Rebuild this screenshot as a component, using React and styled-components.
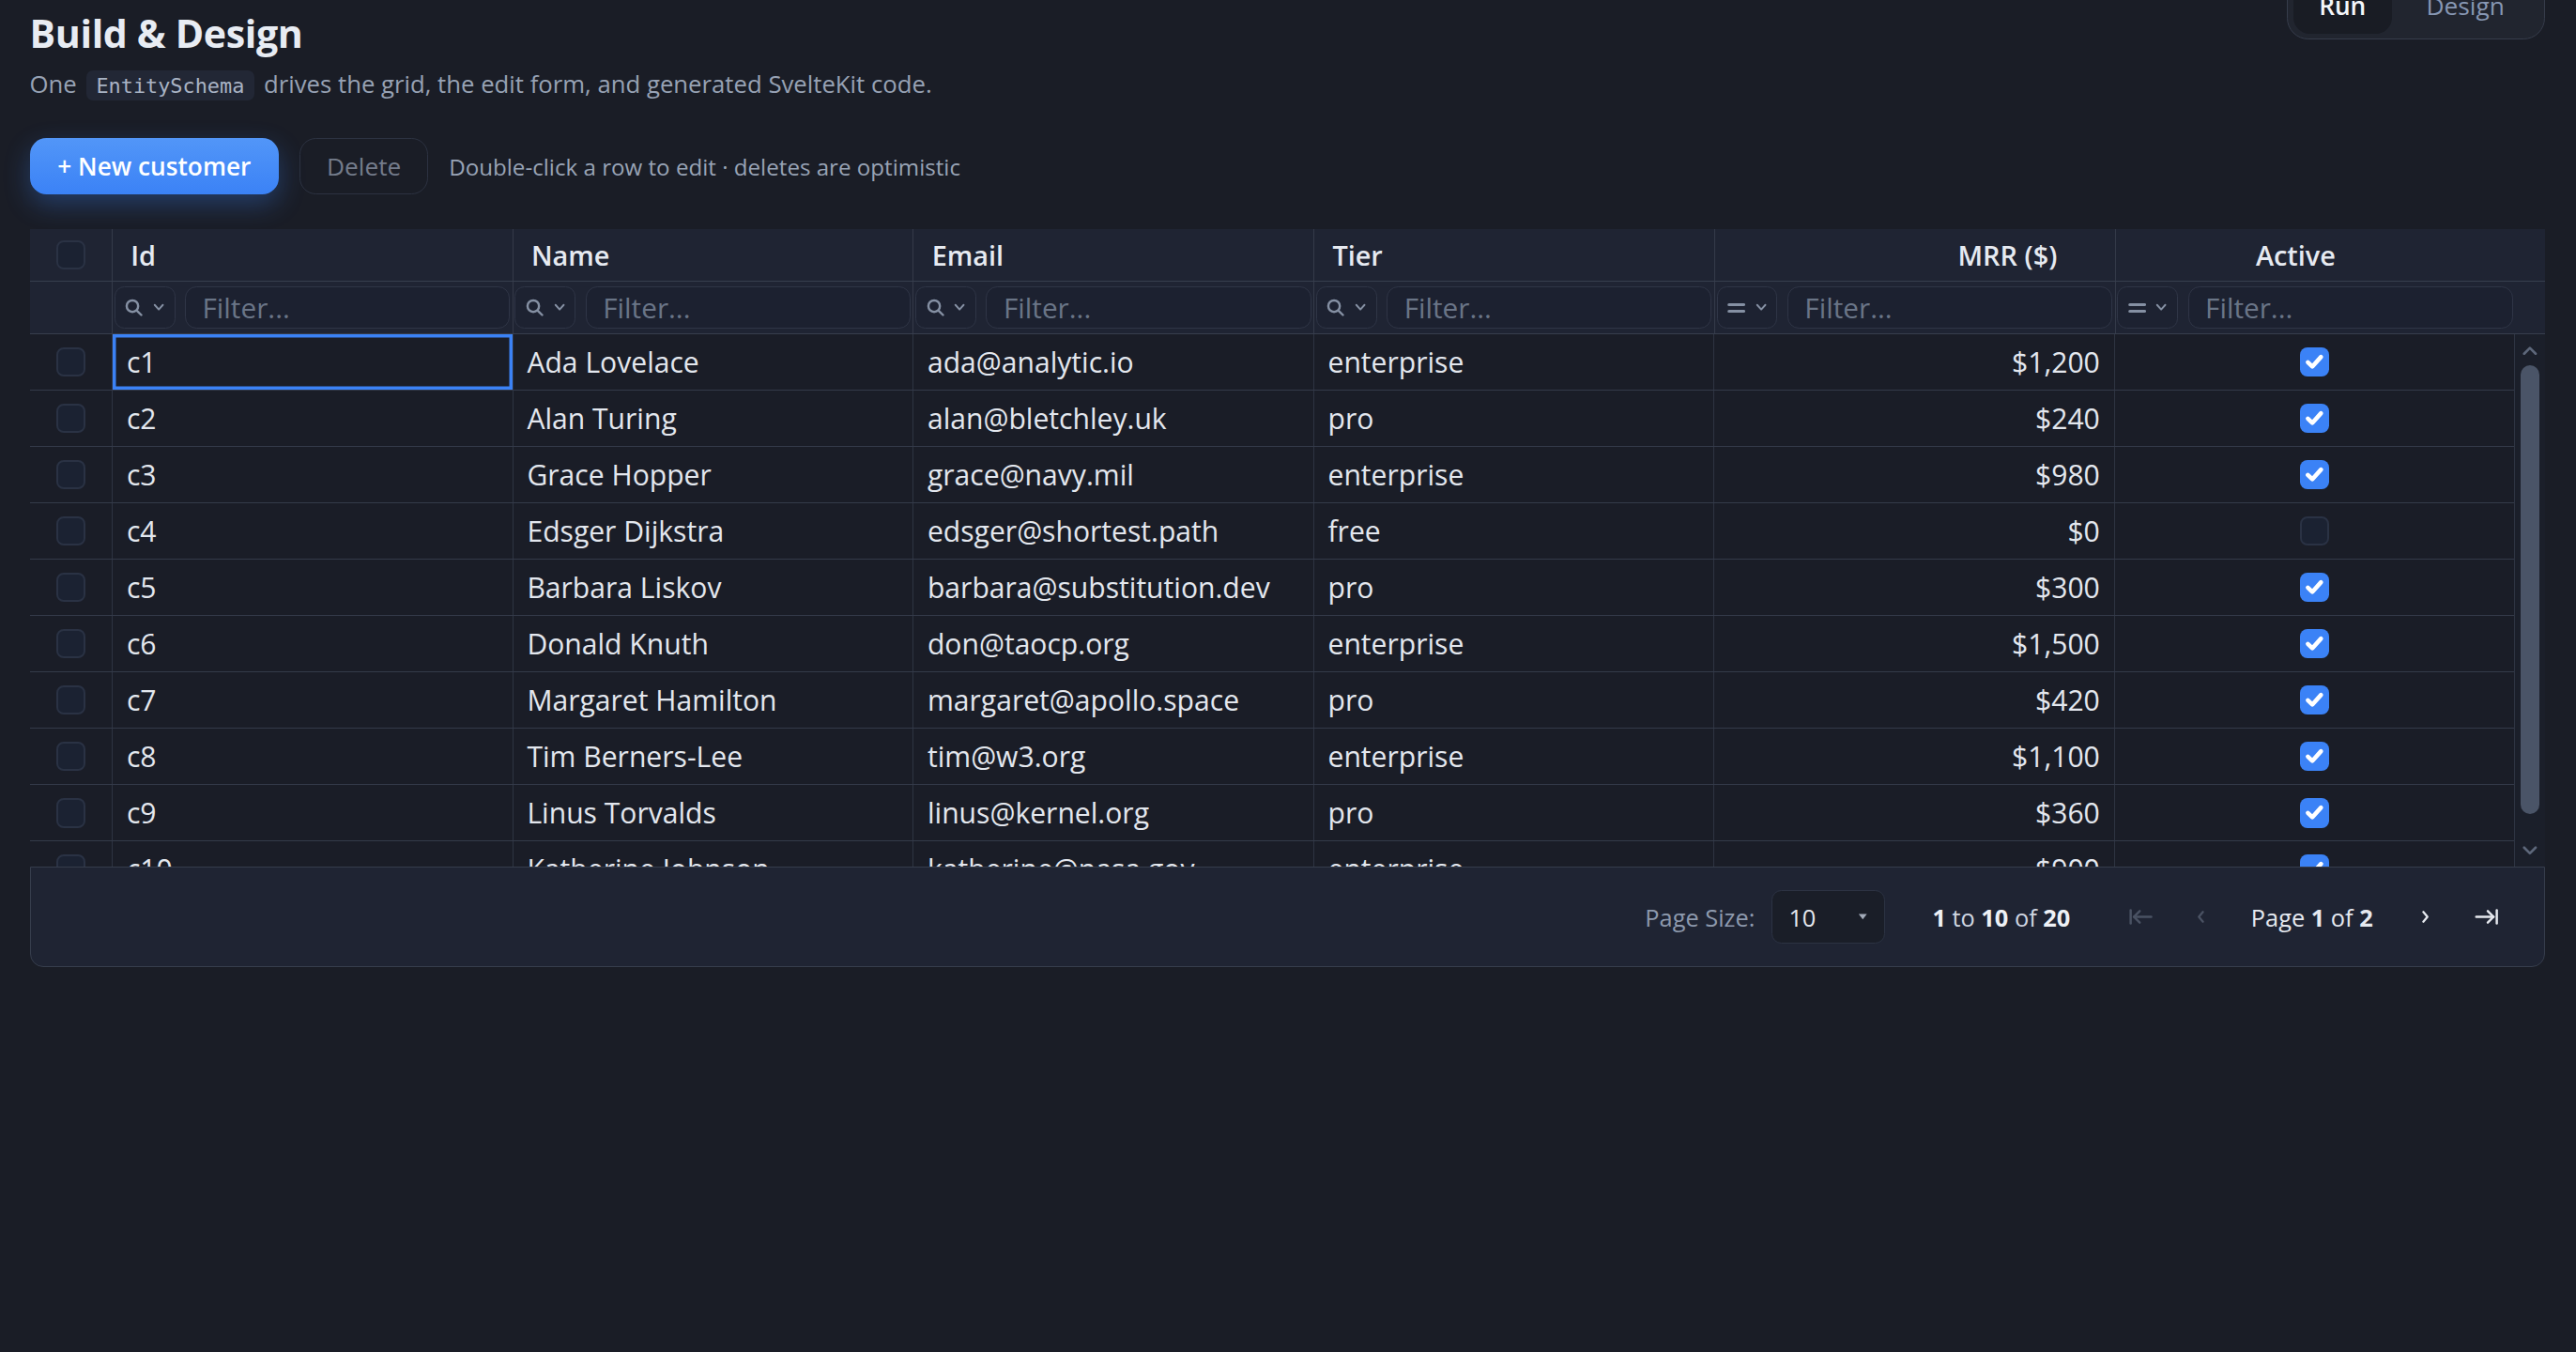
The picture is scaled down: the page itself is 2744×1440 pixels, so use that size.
import React from 'react';
import styled, { createGlobalStyle, css } from 'styled-components';

const FONT = `"Segoe UI", "Open Sans", "Noto Sans", sans-serif`;
const MONO = `"DejaVu Sans Mono", "Liberation Mono", monospace`;

const GlobalStyle = createGlobalStyle`
  html, body {
    margin: 0;
    padding: 0;
    background: #1a1d26;
    overflow: hidden;
  }
  body {
    font-family: ${FONT};
    color: #e6eaf2;
  }
`;

// the reference is laid out at 1568 css px and scaled 1.75
const Page = styled.div`
  zoom: 1.75;
  width: 1568px;
  height: 823px;
  box-sizing: border-box;
  padding: 5px 19px 0 18px;
  overflow: hidden;
`;

const TopBar = styled.div`
  display: flex;
  justify-content: space-between;
  align-items: flex-start;
`;

const TitleBlock = styled.div`
  display: flex;
  flex-direction: column;
`;

const Title = styled.h1`
  margin: 0;
  font-size: 23.5px;
  line-height: 30px;
  font-weight: 700;
  color: #e8ecf3;
  letter-spacing: -0.2px;
`;

const Subtitle = styled.p`
  margin: 6px 0 0;
  font-size: 14.7px;
  line-height: 20px;
  color: #97a2b4;
`;

const Code = styled.code`
  display: inline-block;
  font-family: ${MONO};
  font-size: 12.5px;
  line-height: 15px;
  padding: 2px 6px 1px;
  margin: 0 2px;
  border-radius: 4px;
  background: #222735;
  color: #a9b3c4;
`;

const ModeToggle = styled.div`
  display: flex;
  align-items: center;
  margin-top: -22px;
  padding: 3px;
  border: 1px solid #363c4b;
  border-radius: 13px;
  background: #21252f;
`;

const ModeButton = styled.div`
  height: 34px;
  display: flex;
  align-items: center;
  justify-content: center;
  font-size: 15px;
  font-weight: 600;
  border-radius: 10px;
  ${p => p.$active ? css`
    width: 60px;
    background: #191c24;
    color: #f4f6fa;
  ` : css`
    padding: 0 21px;
    color: #8797b3;
    font-weight: 500;
  `}
`;

const Toolbar = styled.div`
  display: flex;
  align-items: center;
  gap: 12.5px;
  margin-top: 23px;
`;

const PrimaryButton = styled.button`
  height: 34.5px;
  padding: 0 17px;
  border: none;
  border-radius: 10px;
  background: linear-gradient(180deg, #5296f8 0%, #3b82f6 100%);
  box-shadow: 0 6px 16px rgba(59, 130, 246, 0.32);
  color: #ffffff;
  font-family: ${FONT};
  font-size: 15px;
  font-weight: 600;
`;

const GhostButton = styled.button`
  height: 34.5px;
  padding: 0 16px;
  border: 1px solid #2c3241;
  border-radius: 10px;
  background: transparent;
  color: #747c8b;
  font-family: ${FONT};
  font-size: 15px;
  font-weight: 500;
`;

const Hint = styled.span`
  font-size: 13.8px;
  color: #98a3b5;
`;

const COLS = '50px repeat(6, minmax(0, 1fr))';

const Grid = styled.div`
  margin-top: 21px;
  display: flex;
  flex-direction: column;
`;

const HeaderRow = styled.div`
  display: grid;
  grid-template-columns: ${COLS} 18px;
  height: 32px;
  background: #1f2433;
  border-bottom: 1px solid #373e4d;
  box-sizing: border-box;
`;

const HeaderCell = styled.div`
  display: flex;
  align-items: center;
  justify-content: ${p => p.$align === 'right' ? 'flex-end' : p.$align === 'center' ? 'center' : 'flex-start'};
  padding: ${p => p.$align === 'right' ? '0 35px 0 11px' : p.$align === 'center' ? '0 24px 0 0' : '0 11px'};
  font-size: 16.5px;
  font-weight: 600;
  color: #e6eaf1;
  border-left: 1px solid #343a49;
  min-width: 0;
`;

const SelectCell = styled.div`
  display: flex;
  align-items: center;
  justify-content: center;
`;

const FilterRow = styled.div`
  display: grid;
  grid-template-columns: ${COLS} 18px;
  height: 32px;
  background: #1f2433;
  border-bottom: 1px solid #373e4d;
  box-sizing: border-box;
`;

const FilterCell = styled.div`
  display: flex;
  align-items: center;
  gap: 6px;
  padding: 0 1.5px 0 1px;
  border-left: 1px solid #343a49;
  min-width: 0;
`;

const FilterMenu = styled.div`
  flex: 0 0 auto;
  width: 37px;
  height: 26px;
  box-sizing: border-box;
  display: flex;
  align-items: center;
  justify-content: center;
  gap: 6px;
  border: 1px solid #2f3546;
  border-radius: 6px;
  background: #1d2231;
`;

const FilterInput = styled.div`
  flex: 1;
  height: 26px;
  box-sizing: border-box;
  display: flex;
  align-items: center;
  padding-left: 10px;
  border: 1px solid #2f3546;
  border-radius: 7px;
  background: #1c2130;
  font-size: 17px;
  color: #6a7587;
`;

const Body = styled.div`
  display: flex;
  height: 324px;
  overflow: hidden;
  background: #1a1d27;
`;

const Rows = styled.div`
  flex: 1;
  display: flex;
  flex-direction: column;
`;

const Row = styled.div`
  flex: 0 0 auto;
  display: grid;
  grid-template-columns: ${COLS};
  height: 34.3px;
  box-sizing: border-box;
  border-bottom: 1px solid #343a49;
`;

const Cell = styled.div`
  display: flex;
  align-items: center;
  justify-content: ${p => p.$align === 'right' ? 'flex-end' : p.$align === 'center' ? 'center' : 'flex-start'};
  padding: 0 8.5px;
  font-size: 17.2px;
  color: #e3e7ee;
  border-left: 1px solid #2e3442;
  white-space: nowrap;
  overflow: hidden;
  min-width: 0;
  ${p => p.$focused && css`
    box-shadow: inset 0 0 0 2px #3b82f6;
  `}
`;

const Scrollbar = styled.div`
  flex: 0 0 18px;
  border-left: 1px solid #2e3442;
  background: #1b1f2a;
  display: flex;
  flex-direction: column;
  align-items: center;
`;

const ScrollArrow = styled.div`
  height: 19px;
  display: flex;
  align-items: center;
  justify-content: center;
`;

const ScrollThumb = styled.div`
  width: 11px;
  height: 273px;
  border-radius: 6px;
  background: #4a5467;
`;

const ScrollSpacer = styled.div`
  flex: 1;
`;

const Box = styled.div`
  width: 18px;
  height: 18px;
  box-sizing: border-box;
  border-radius: 4.5px;
  display: flex;
  align-items: center;
  justify-content: center;
  ${p => p.$checked ? css`
    background: #3b82f6;
  ` : css`
    background: #1b2232;
    border: 1.5px solid #2a3244;
  `}
`;

const Footer = styled.div`
  height: 61px;
  box-sizing: border-box;
  display: flex;
  align-items: center;
  justify-content: flex-end;
  padding-right: 27px;
  background: #1f2433;
  border: 1px solid #363d4c;
  border-radius: 0 0 8px 8px;
  font-size: 14.5px;
  color: #cdd4df;
`;

const PageSizeLabel = styled.span`
  color: #8d99ad;
  margin-right: 10px;
`;

const PageSizeSelect = styled.div`
  width: 69px;
  height: 33px;
  box-sizing: border-box;
  display: flex;
  align-items: center;
  justify-content: space-between;
  padding: 0 10px;
  border: 1px solid #2c3343;
  border-radius: 6px;
  background: #1a1e28;
  color: #e5e8ee;
  margin-right: 29px;
`;

const Summary = styled.span`
  color: #cfd6e1;
  margin-right: 35px;
  b { color: #eef1f6; font-weight: 700; }
`;

const PageLabel = styled.span`
  color: #e5e9f0;
  b { font-weight: 700; }
`;

const PagerIcon = styled.span`
  display: inline-flex;
  align-items: center;
  margin: ${p => p.$gap || '0'};
  color: ${p => p.$disabled ? '#4a5263' : '#e6e9ef'};
`;

const SearchIcon = () => (
  <svg width="11" height="11" viewBox="0 0 11 11" fill="none" stroke="#8590a3" strokeWidth="1.4" strokeLinecap="round">
    <circle cx="4.6" cy="4.6" r="3.5" />
    <line x1="7.3" y1="7.3" x2="10" y2="10" />
  </svg>
);

const EqualsIcon = () => (
  <svg width="11" height="8" viewBox="0 0 11 8" fill="none" stroke="#8590a3" strokeWidth="1.8" strokeLinecap="round">
    <line x1="1" y1="2" x2="10" y2="2" />
    <line x1="1" y1="6" x2="10" y2="6" />
  </svg>
);

const SmallChevron = () => (
  <svg width="7" height="5" viewBox="0 0 7 5" fill="none" stroke="#8590a3" strokeWidth="1.1" strokeLinecap="round" strokeLinejoin="round">
    <polyline points="1,1 3.5,3.8 6,1" />
  </svg>
);

const Check = () => (
  <svg width="13" height="13" viewBox="0 0 13 13" fill="none" stroke="#ffffff" strokeWidth="2.6" strokeLinecap="round" strokeLinejoin="round">
    <polyline points="2.5,6.8 5.2,9.4 10.5,3.5" />
  </svg>
);

const ScrollChevron = ({ up }) => (
  <svg width="9" height="6" viewBox="0 0 9 6" fill="none" stroke="#5d677a" strokeWidth="1.5" strokeLinecap="round" strokeLinejoin="round">
    <polyline points={up ? '1,5 4.5,1.5 8,5' : '1,1 4.5,4.5 8,1'} />
  </svg>
);

const FirstIcon = () => (
  <svg width="15" height="12" viewBox="0 0 15 12" fill="none" stroke="currentColor" strokeWidth="1.4" strokeLinecap="round" strokeLinejoin="round">
    <line x1="1.5" y1="2" x2="1.5" y2="10" />
    <line x1="3.5" y1="6" x2="14" y2="6" />
    <polyline points="7,2.5 3.5,6 7,9.5" />
  </svg>
);

const LastIcon = () => (
  <svg width="15" height="12" viewBox="0 0 15 12" fill="none" stroke="currentColor" strokeWidth="1.4" strokeLinecap="round" strokeLinejoin="round">
    <line x1="13.5" y1="2" x2="13.5" y2="10" />
    <line x1="1" y1="6" x2="11.5" y2="6" />
    <polyline points="8,2.5 11.5,6 8,9.5" />
  </svg>
);

const PrevIcon = () => (
  <svg width="8" height="12" viewBox="0 0 8 12" fill="none" stroke="currentColor" strokeWidth="1.3" strokeLinecap="round" strokeLinejoin="round">
    <polyline points="5.5,3 3,6 5.5,9" />
  </svg>
);

const NextIcon = () => (
  <svg width="8" height="12" viewBox="0 0 8 12" fill="none" stroke="currentColor" strokeWidth="1.3" strokeLinecap="round" strokeLinejoin="round">
    <polyline points="2.5,3 5,6 2.5,9" />
  </svg>
);

const Caret = () => (
  <svg width="6" height="5" viewBox="0 0 6 5">
    <polygon points="0.5,0.8 5.5,0.8 3,4.2" fill="#a3acba" />
  </svg>
);

const customers = [
  { id: 'c1', name: 'Ada Lovelace', email: 'ada@analytic.io', tier: 'enterprise', mrr: 1200, active: true },
  { id: 'c2', name: 'Alan Turing', email: 'alan@bletchley.uk', tier: 'pro', mrr: 240, active: true },
  { id: 'c3', name: 'Grace Hopper', email: 'grace@navy.mil', tier: 'enterprise', mrr: 980, active: true },
  { id: 'c4', name: 'Edsger Dijkstra', email: 'edsger@shortest.path', tier: 'free', mrr: 0, active: false },
  { id: 'c5', name: 'Barbara Liskov', email: 'barbara@substitution.dev', tier: 'pro', mrr: 300, active: true },
  { id: 'c6', name: 'Donald Knuth', email: 'don@taocp.org', tier: 'enterprise', mrr: 1500, active: true },
  { id: 'c7', name: 'Margaret Hamilton', email: 'margaret@apollo.space', tier: 'pro', mrr: 420, active: true },
  { id: 'c8', name: 'Tim Berners-Lee', email: 'tim@w3.org', tier: 'enterprise', mrr: 1100, active: true },
  { id: 'c9', name: 'Linus Torvalds', email: 'linus@kernel.org', tier: 'pro', mrr: 360, active: true },
  { id: 'c10', name: 'Katherine Johnson', email: 'katherine@nasa.gov', tier: 'enterprise', mrr: 900, active: true },
];

const columns = [
  { key: 'id', label: 'Id', filter: 'text' },
  { key: 'name', label: 'Name', filter: 'text' },
  { key: 'email', label: 'Email', filter: 'text' },
  { key: 'tier', label: 'Tier', filter: 'text' },
  { key: 'mrr', label: 'MRR ($)', filter: 'number', align: 'right' },
  { key: 'active', label: 'Active', filter: 'number', align: 'center' },
];

const Checkbox = ({ checked }) => (
  <Box $checked={checked}>{checked && <Check />}</Box>
);

const formatValue = (col, row) => {
  if (col.key === 'mrr') return `$${row.mrr.toLocaleString('en-US')}`;
  if (col.key === 'active') return <Checkbox checked={row.active} />;
  return row[col.key];
};

const CustomerGrid = () => (
  <Grid>
    <HeaderRow>
      <SelectCell><Checkbox /></SelectCell>
      {columns.map(col => (
        <HeaderCell key={col.key} $align={col.align}>{col.label}</HeaderCell>
      ))}
      <div />
    </HeaderRow>
    <FilterRow>
      <div />
      {columns.map(col => (
        <FilterCell key={col.key}>
          <FilterMenu>
            {col.filter === 'text' ? <SearchIcon /> : <EqualsIcon />}
            <SmallChevron />
          </FilterMenu>
          <FilterInput>Filter...</FilterInput>
        </FilterCell>
      ))}
      <div />
    </FilterRow>
    <Body>
      <Rows>
        {customers.map((row, i) => (
          <Row key={row.id}>
            <SelectCell><Checkbox /></SelectCell>
            {columns.map((col, j) => (
              <Cell key={col.key} $align={col.align} $focused={i === 0 && j === 0}>
                {formatValue(col, row)}
              </Cell>
            ))}
          </Row>
        ))}
      </Rows>
      <Scrollbar>
        <ScrollArrow><ScrollChevron up /></ScrollArrow>
        <ScrollThumb />
        <ScrollSpacer />
        <ScrollArrow><ScrollChevron /></ScrollArrow>
      </Scrollbar>
    </Body>
    <Footer>
      <PageSizeLabel>Page Size:</PageSizeLabel>
      <PageSizeSelect>
        <span>10</span>
        <Caret />
      </PageSizeSelect>
      <Summary><b>1</b> to <b>10</b> of <b>20</b></Summary>
      <PagerIcon $disabled><FirstIcon /></PagerIcon>
      <PagerIcon $disabled $gap="0 27px 0 25px"><PrevIcon /></PagerIcon>
      <PageLabel>Page <b>1</b> of <b>2</b></PageLabel>
      <PagerIcon $gap="0 26px 0 28px"><NextIcon /></PagerIcon>
      <PagerIcon><LastIcon /></PagerIcon>
    </Footer>
  </Grid>
);

export default function App() {
  return (
    <>
      <GlobalStyle />
      <Page>
        <TopBar>
          <TitleBlock>
            <Title>Build &amp; Design</Title>
            <Subtitle>
              One <Code>EntitySchema</Code> drives the grid, the edit form, and generated SvelteKit code.
            </Subtitle>
          </TitleBlock>
          <ModeToggle>
            <ModeButton $active>Run</ModeButton>
            <ModeButton>Design</ModeButton>
          </ModeToggle>
        </TopBar>
        <Toolbar>
          <PrimaryButton>+ New customer</PrimaryButton>
          <GhostButton>Delete</GhostButton>
          <Hint>Double-click a row to edit · deletes are optimistic</Hint>
        </Toolbar>
        <CustomerGrid />
      </Page>
    </>
  );
}
